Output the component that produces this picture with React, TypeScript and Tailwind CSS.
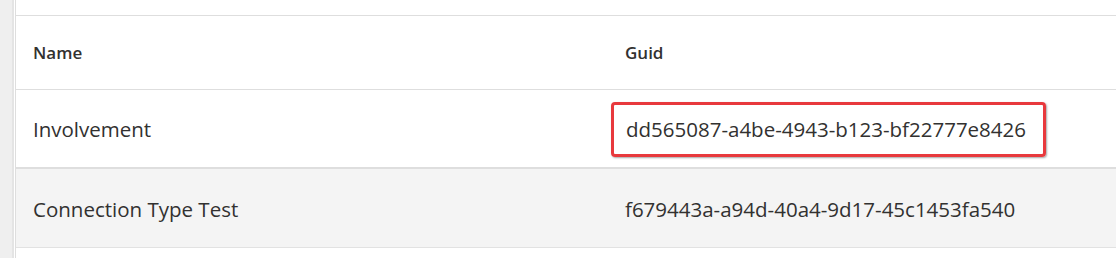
const rows = [
  { name: "Involvement", guid: "dd565087-a4be-4943-b123-bf22777e8426", highlight: true },
  { name: "Connection Type Test", guid: "f679443a-a94d-40a4-9d17-45c1453fa540", highlight: false },
];

export default function App() {
  return (
    <div
      className="flex h-[258px] w-[1116px] overflow-hidden bg-white text-[#323130]"
      style={{ fontFamily: '"Open Sans", "Noto Sans", sans-serif' }}
    >
      {/* side strip */}
      <div className="w-[12px] shrink-0 bg-[#efefef]" />
      <div className="w-[2px] shrink-0 bg-[#e4e4e4]" />
      <div className="w-[1px] shrink-0 bg-white" />
      <div className="flex-1 border-l border-[#dedede]">
        <div className="h-[15px]" />
        <div className="grid grid-cols-[592px_1fr] border-t border-[#dedede]">
          <div className="flex h-[74px] items-center border-b border-[#dedede] pl-[17px] text-[17px] font-semibold">
            Name
          </div>
          <div className="flex h-[74px] items-center border-b border-[#dedede] pl-[17px] text-[17px] font-semibold">
            Guid
          </div>
          {rows.map((r, i) => (
            <div key={r.guid} className="contents">
              <div
                className={`flex h-[79px] items-center pl-[17px] pt-[2px] text-[20.5px] ${
                  i % 2 ? "bg-[#f4f4f4] border-b border-[#e2e2e2]" : "bg-white border-b-2 border-[#dedede]"
                }`}
              >
                {r.name}
              </div>
              <div
                className={`flex h-[79px] items-center pl-[3px] pt-[2px] text-[20.5px] ${
                  i % 2 ? "bg-[#f4f4f4] border-b border-[#e2e2e2]" : "bg-white border-b-2 border-[#dedede]"
                }`}
              >
                {r.highlight ? (
                  <span className="rounded-[4px] border-[3px] border-[#e8393d] py-[10px] pl-[12px] pr-[17px] leading-[29px] shadow-[1px_1px_2px_rgba(0,0,0,0.35)]">
                    {r.guid}
                  </span>
                ) : (
                  <span className="pl-[14px]">{r.guid}</span>
                )}
              </div>
            </div>
          ))}
        </div>
      </div>
    </div>
  );
}
